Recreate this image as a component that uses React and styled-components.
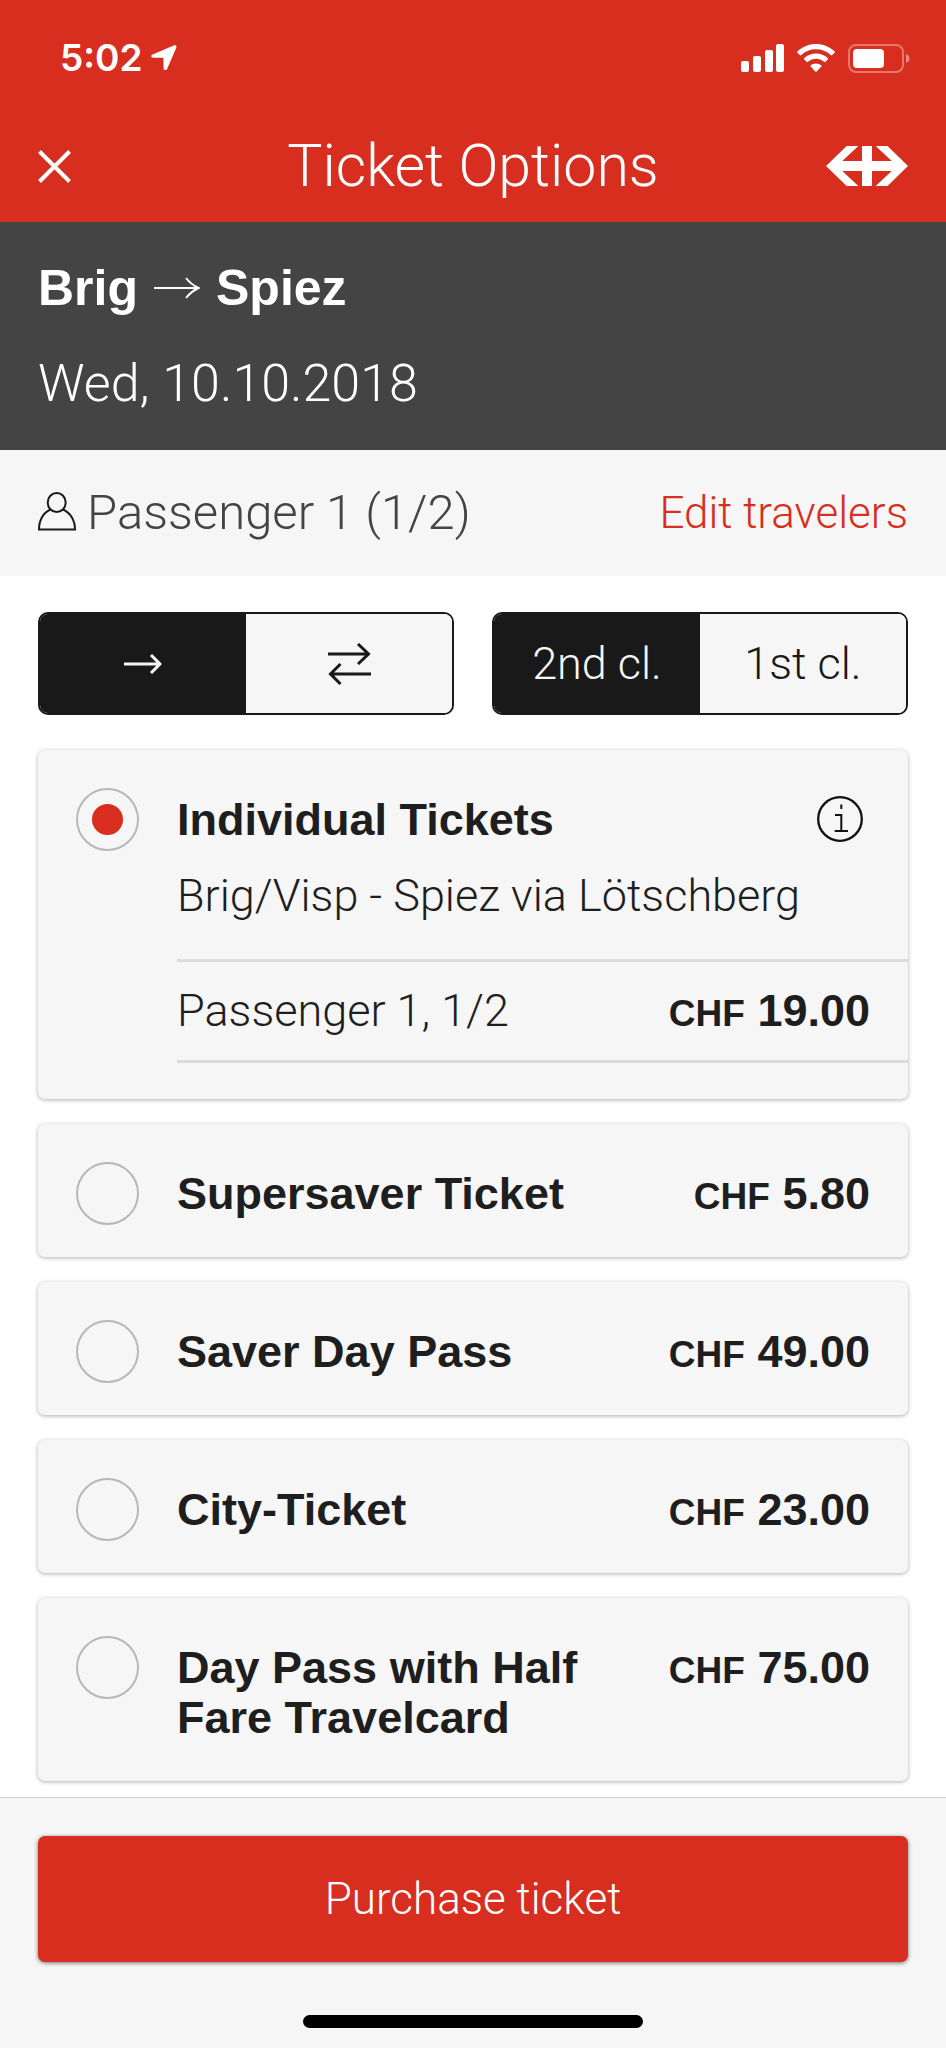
import React, { useState } from "react";
import styled, { createGlobalStyle } from "styled-components";

const color = {
  red: "#d82e20",
  slate: "#444444",
  ink: "#191919",
  text: "#1e1e1e",
  panel: "#f6f6f6",
  line: "#dcdcdc",
  ring: "#b8b8b8",
};

const lightFont = `Roboto, "Liberation Sans", sans-serif`;
const boldFont = `"Liberation Sans", Arial, sans-serif`;

const GlobalStyle = createGlobalStyle`
  *, *::before { box-sizing: border-box; }
  body { margin: 0; background: #ffffff; }
  button { margin: 0; padding: 0; border: 0; background: none; font: inherit; color: inherit; cursor: pointer; }
  h1, h2, p { margin: 0; }
  svg { display: block; flex: none; }
`;

const Page = styled.div`
  display: flex;
  flex-direction: column;
  min-height: 100vh;
  font-family: ${lightFont};
  font-weight: 300;
  font-size: 45px;
  line-height: 50px;
  color: ${color.text};
`;

const Header = styled.header`
  background: ${color.red};
  color: #ffffff;
`;

const StatusBar = styled.div`
  display: flex;
  align-items: center;
  justify-content: space-between;
  height: 110px;
  padding: 6px 36px 0 60px;
`;

const StatusGroup = styled.div`
  display: flex;
  align-items: center;
  gap: ${(p) => p.$gap}px;
`;

const Clock = styled.span`
  font-family: Inter, sans-serif;
  font-weight: 600;
  font-size: 37px;
`;

const NavBar = styled.div`
  display: grid;
  grid-template-columns: 1fr auto 1fr;
  align-items: center;
  height: 112px;
  padding: 0 38px;
`;

const CloseButton = styled.button`
  justify-self: start;
`;

const Title = styled.h1`
  font-weight: 300;
  font-size: 59px;
  line-height: 70px;
`;

const Logo = styled.svg`
  justify-self: end;
`;

const Trip = styled.section`
  display: flex;
  flex-direction: column;
  gap: 36px;
  padding: 36px 38px;
  background: ${color.slate};
  color: #ffffff;
`;

const Route = styled.h2`
  display: flex;
  align-items: center;
  gap: 16px;
  font-family: ${boldFont};
  font-weight: 700;
  font-size: 50px;
  line-height: 60px;
`;

const TripDate = styled.p`
  font-size: 52px;
  line-height: 60px;
`;

const Travelers = styled.section`
  display: flex;
  align-items: center;
  justify-content: space-between;
  height: 126px;
  padding: 0 38px;
  background: ${color.panel};
`;

const Traveler = styled.div`
  display: flex;
  align-items: center;
  gap: 11px;
  font-size: 49px;
  color: ${color.slate};
`;

const EditLink = styled.a`
  font-size: 44px;
  color: ${color.red};
  text-decoration: none;
`;

const Main = styled.main`
  display: flex;
  flex: 1;
  flex-direction: column;
  gap: 35px;
  padding: 36px 38px 16px;
`;

const Filters = styled.div`
  display: grid;
  grid-template-columns: 1fr 1fr;
  gap: 38px;
`;

const Segmented = styled.div`
  display: grid;
  grid-template-columns: 1fr 1fr;
  height: 103px;
  overflow: hidden;
  border: 2px solid ${color.ink};
  border-radius: 10px;
  background: ${color.panel};
`;

const Segment = styled.button`
  display: flex;
  align-items: center;
  justify-content: center;
  background: ${(p) => (p.$active ? color.ink : color.panel)};
  color: ${(p) => (p.$active ? color.panel : color.ink)};
`;

const TicketList = styled.div`
  display: flex;
  flex-direction: column;
  gap: 25px;
`;

const Card = styled.article`
  display: grid;
  grid-template-columns: 63px 1fr;
  column-gap: 38px;
  align-items: start;
  padding: 38px 0 32px 38px;
  border-radius: 7px;
  background: ${color.panel};
  box-shadow: 0 1px 4px rgba(0, 0, 0, 0.32);
`;

const Radio = styled.input`
  appearance: none;
  display: grid;
  place-items: center;
  width: 63px;
  height: 63px;
  margin: 0;
  border: 2px solid ${color.ring};
  border-radius: 50%;
  cursor: pointer;

  &:checked::before {
    content: "";
    width: 31px;
    height: 31px;
    border-radius: 50%;
    background: ${color.red};
  }
`;

const CardHead = styled.div`
  display: flex;
  align-items: flex-start;
  justify-content: space-between;
  gap: 24px;
  padding: 7px 38px 6px 0;
`;

const TicketName = styled.label`
  font-family: ${boldFont};
  font-weight: 700;
`;

const PriceText = styled.span`
  font-family: ${boldFont};
  font-weight: 700;
  white-space: nowrap;
`;

const Currency = styled.span`
  font-size: 37px;
  line-height: 37px;
`;

const InfoButton = styled.button`
  padding: 1px 7px;
`;

const Description = styled.p`
  padding: 20px 38px 38px 0;
`;

const FareRow = styled.div`
  display: flex;
  align-items: center;
  justify-content: space-between;
  height: 104px;
  margin-bottom: 4px;
  padding-right: 38px;
  border-top: 3px solid ${color.line};
  border-bottom: 3px solid ${color.line};
`;

const Footer = styled.footer`
  display: flex;
  flex-direction: column;
  align-items: center;
  gap: 53px;
  padding: 38px 38px 20px;
  border-top: 1px solid #cccccc;
  background: ${color.panel};
`;

const PurchaseButton = styled.button`
  width: 100%;
  height: 126px;
  border-radius: 7px;
  background: ${color.red};
  color: #ffffff;
  font-size: 44px;
  box-shadow: 0 1px 4px rgba(0, 0, 0, 0.55);
`;

const HomeIndicator = styled.div`
  width: 39%;
  height: 13px;
  border-radius: 7px;
  background: #000000;
`;

function LocationIcon() {
  return (
    <svg width="26" height="26" viewBox="0 0 26 26" fill="currentColor" aria-hidden="true">
      <path d="M23.3.3 1.6 9.4C-.4 10.3 0 12.6 1.8 12.7L11.8 12.8c.4 0 .6.2.6.6L12.6 23.5c.1 1.8 2.7 2.2 3.5.4L25.3 2.700C26 1 24.800-.3 23.3.3Z" />
    </svg>
  );
}

function SignalIcon() {
  return (
    <svg width="43" height="28" viewBox="0 0 43 28" fill="currentColor" aria-hidden="true">
      <rect x="0" y="17" width="8" height="11" rx="2" />
      <rect x="12" y="12" width="8" height="16" rx="2" />
      <rect x="24" y="6" width="8" height="22" rx="2" />
      <rect x="35" y="0" width="8" height="28" rx="2" />
    </svg>
  );
}

function WifiIcon() {
  return (
    <svg width="38" height="28" viewBox="0 0 38 28" fill="currentColor" aria-hidden="true">
      <path d="M19 0C12 0 5.5 2.6.5 7.3c-.5.5-.5 1 0 1.5L2.7 11c.5.5 1 .5 1.5 0C8.2 7.3 13.4 5.3 19 5.3s10.8 2 14.8 5.7c.5.5 1 .5 1.5 0l2.2-2.200c.5-.5.5-1 0-1.5C32.5 2.6 26 0 19 0Z" />
      <path d="M19 9.500c-4.500 0-8.500 1.700-11.700 4.500-.5.5-.5 1 0 1.500l2.200 2.200c.5.5 1 .5 1.500 0 2.200-1.900 5-3 8-3s5.800 1.100 8 3c.5.5 1 .5 1.500 0l2.200-2.200c.5-.5.5-1 0-1.500C27.500 11.200 23.500 9.500 19 9.500Z" />
      <path d="M19 19.500c-2 0-3.700.7-5.100 1.800-.6.5-.6 1 0 1.500l4.400 4.600c.5.5.9.5 1.400 0l4.400-4.600c.6-.5.6-1 0-1.500-1.400-1.100-3.100-1.800-5.100-1.800Z" />
    </svg>
  );
}

function BatteryIcon() {
  return (
    <svg width="62" height="29" viewBox="0 0 62 29" aria-hidden="true">
      <rect x="1" y="1" width="54" height="27" rx="7" fill="none" stroke="#fff" strokeOpacity="0.35" strokeWidth="2" />
      <rect x="5" y="5" width="31" height="19" rx="4" fill="#fff" />
      <path d="M58 10c2.200.8 3.500 2.400 3.500 4.500S60.200 18.200 58 19Z" fill="#fff" fillOpacity="0.45" />
    </svg>
  );
}

function CloseIcon() {
  return (
    <svg width="33" height="33" viewBox="0 0 33 33" fill="none" stroke="currentColor" strokeWidth="4" aria-hidden="true">
      <path d="M1.500 1.500 31.500 31.500M31.500 1.500 1.500 31.500" />
    </svg>
  );
}

function RailwayLogo() {
  return (
    <Logo width="82" height="40" viewBox="0 0 82 40" fill="currentColor" role="img" aria-label="SBB">
      <path d="M0 20 20.700 0H32.300L16.300 15H36V0H46V15H65.700L49.700 0H61.500L82 20 61.500 40H49.700L65.700 25H46V40H36V25H16.300L32.300 40H20.700Z" />
    </Logo>
  );
}

function RouteArrow() {
  return (
    <svg width="46" height="22" viewBox="0 0 46 22" fill="none" stroke="currentColor" strokeWidth="2" role="img" aria-label="to">
      <path d="M0 11H44M32 1Q37 7.500 44.500 11 37 14.500 32 21" />
    </svg>
  );
}

function OneWayIcon() {
  return (
    <svg width="38" height="20" viewBox="0 0 38 20" fill="none" stroke="currentColor" strokeWidth="3" aria-hidden="true">
      <path d="M0 10H36M27 1 36 10 27 19" />
    </svg>
  );
}

function ReturnIcon() {
  return (
    <svg width="43" height="42" viewBox="0 0 43 42" fill="none" stroke="currentColor" strokeWidth="3" aria-hidden="true">
      <path d="M0 11H40.500M30 1 40.500 11 30 21M43 31H2.500M12.500 21 2.500 31 12.500 41" />
    </svg>
  );
}

function PersonIcon() {
  return (
    <svg width="38" height="43" viewBox="0 0 38 43" fill="none" stroke="#1a1a1a" strokeWidth="2" aria-hidden="true">
      <ellipse cx="18.700" cy="10.500" rx="9" ry="9.500" />
      <path d="M12.500 17.500C5.500 20.500 1 28 1 37.500H37C37 28 32 20.500 25 17.500" />
    </svg>
  );
}

function InfoIcon() {
  return (
    <svg width="46" height="46" viewBox="0 0 46 46" fill="none" stroke="#111" strokeWidth="2" aria-hidden="true">
      <circle cx="23" cy="23" r="21.800" strokeWidth="2.300" />
      <path d="M24.300 8.500V13M18 19H24.300V35M17.700 35H31" />
    </svg>
  );
}

function Price({ amount }) {
  return (
    <PriceText>
      <Currency>CHF</Currency> {amount}
    </PriceText>
  );
}

function Choice({ label, options, value, onChange }) {
  return (
    <Segmented role="group" aria-label={label}>
      {options.map((o) => (
        <Segment
          key={o.id}
          type="button"
          $active={o.id === value}
          aria-pressed={o.id === value}
          aria-label={o.name}
          onClick={() => onChange(o.id)}
        >
          {o.content}
        </Segment>
      ))}
    </Segmented>
  );
}

const directions = [
  { id: "single", name: "One way", content: <OneWayIcon /> },
  { id: "return", name: "Return", content: <ReturnIcon /> },
];

const classes = [
  { id: "second", content: "2nd cl." },
  { id: "first", content: "1st cl." },
];

const tickets = [
  {
    id: "individual",
    name: "Individual Tickets",
    description: "Brig/Visp - Spiez via Lötschberg",
    fare: { passenger: "Passenger 1, 1/2", amount: "19.00" },
  },
  { id: "supersaver", name: "Supersaver Ticket", amount: "5.80" },
  { id: "saver-day", name: "Saver Day Pass", amount: "49.00" },
  { id: "city", name: "City-Ticket", amount: "23.00" },
  { id: "half-fare-day", name: "Day Pass with Half Fare Travelcard", amount: "75.00" },
];

export default function App() {
  const [direction, setDirection] = useState("single");
  const [travelClass, setTravelClass] = useState("second");
  const [ticket, setTicket] = useState("individual");

  return (
    <Page>
      <GlobalStyle />
      <Header>
        <StatusBar>
          <StatusGroup $gap={8}>
            <Clock>5:02</Clock>
            <LocationIcon />
          </StatusGroup>
          <StatusGroup $gap={13}>
            <SignalIcon />
            <WifiIcon />
            <BatteryIcon />
          </StatusGroup>
        </StatusBar>
        <NavBar>
          <CloseButton type="button" aria-label="Close">
            <CloseIcon />
          </CloseButton>
          <Title>Ticket Options</Title>
          <RailwayLogo />
        </NavBar>
      </Header>

      <Trip>
        <Route>
          <span>Brig</span>
          <RouteArrow />
          <span>Spiez</span>
        </Route>
        <TripDate>Wed, 10.10.2018</TripDate>
      </Trip>

      <Travelers>
        <Traveler>
          <PersonIcon />
          <span>Passenger 1 (1/2)</span>
        </Traveler>
        <EditLink href="#travelers">Edit travelers</EditLink>
      </Travelers>

      <Main>
        <Filters>
          <Choice label="Direction" options={directions} value={direction} onChange={setDirection} />
          <Choice label="Class" options={classes} value={travelClass} onChange={setTravelClass} />
        </Filters>

        <TicketList role="radiogroup" aria-label="Tickets">
          {tickets.map((t) => (
            <Card key={t.id}>
              <Radio
                type="radio"
                name="ticket"
                id={t.id}
                checked={ticket === t.id}
                onChange={() => setTicket(t.id)}
              />
              <div>
                <CardHead>
                  <TicketName htmlFor={t.id}>{t.name}</TicketName>
                  {t.amount ? (
                    <Price amount={t.amount} />
                  ) : (
                    <InfoButton type="button" aria-label="Ticket information">
                      <InfoIcon />
                    </InfoButton>
                  )}
                </CardHead>
                {t.description && <Description>{t.description}</Description>}
                {t.fare && (
                  <FareRow>
                    <span>{t.fare.passenger}</span>
                    <Price amount={t.fare.amount} />
                  </FareRow>
                )}
              </div>
            </Card>
          ))}
        </TicketList>
      </Main>

      <Footer>
        <PurchaseButton type="button">Purchase ticket</PurchaseButton>
        <HomeIndicator />
      </Footer>
    </Page>
  );
}
